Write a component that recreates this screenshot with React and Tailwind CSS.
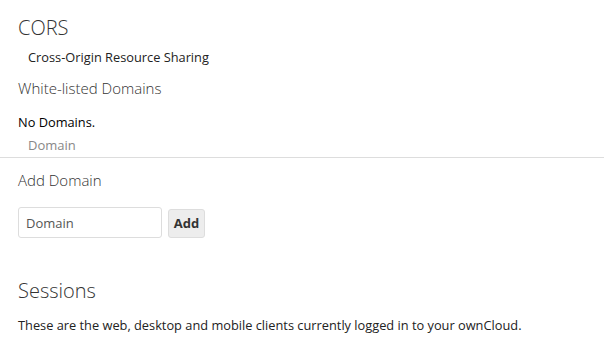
export default function App() {
  return (
    <div className="min-h-screen bg-white font-['Open_Sans',sans-serif] text-[#333]">
      <div className="pl-[18px] pt-[13px]">
        <h2 className="text-[20px] font-light leading-[30px] text-[#333]">CORS</h2>
        <p className="mt-[4px] pl-[10px] text-[12.8px] leading-[20px] text-[#222]">
          Cross-Origin Resource Sharing
        </p>
        <h3 className="mt-[9px] text-[15px] font-light leading-[24px] text-[#333]">
          White-listed Domains
        </h3>
        <p className="mt-[12px] text-[12.8px] leading-[20px] text-black">No Domains.</p>
        <div className="mt-[3px] pl-[10px] text-[13px] leading-[20px] text-[#888]">Domain</div>
      </div>
      <div className="mt-[2px] border-b border-[#ddd] mr-[1px]" />
      <div className="pl-[18px] pt-[10px]">
        <h3 className="text-[15px] font-light leading-[24px] text-[#333]">Add Domain</h3>
        <div className="mt-[15px] flex items-end gap-[6px]">
          <input
            type="text"
            placeholder="Domain"
            className="h-[31px] w-[144px] rounded-[3px] border border-[#ddd] px-[7px] text-[13px] text-[#333] placeholder:text-[#555] outline-none"
          />
          <button className="h-[29px] w-[37px] rounded-[3px] border border-[#ddd] bg-[#ededed] text-[13px] font-bold text-[#333]">
            Add
          </button>
        </div>
        <h2 className="mt-[38px] text-[20px] font-light leading-[30px] text-[#333]">Sessions</h2>
        <p className="mt-[9px] text-[12.8px] leading-[20px] text-[#222]">
          These are the web, desktop and mobile clients currently logged in to your ownCloud.
        </p>
      </div>
    </div>
  );
}
